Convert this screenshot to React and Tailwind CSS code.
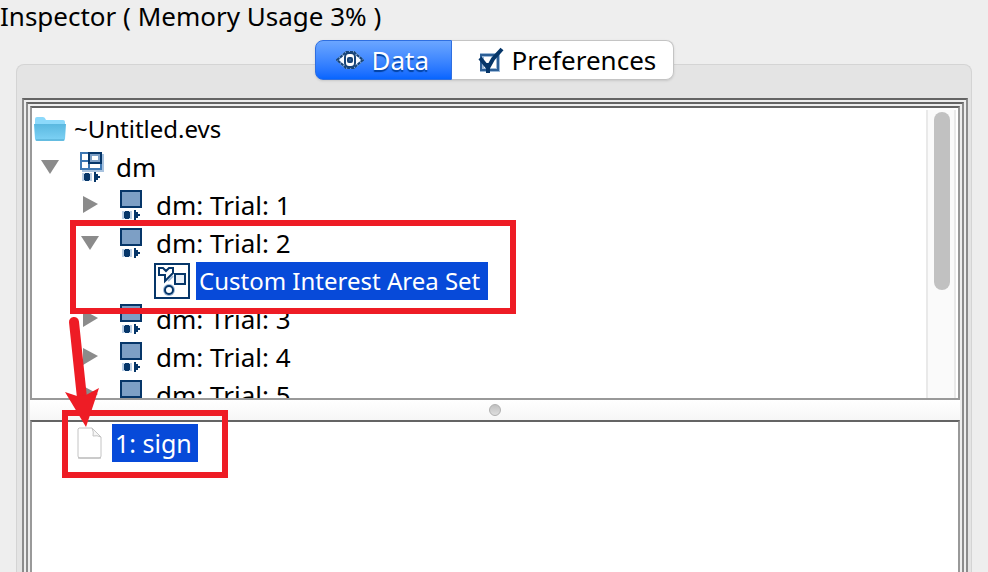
import React, { useState } from "react";

function EyeIcon() {
  return (
    <svg width="28" height="18" viewBox="0 0 28 18" aria-hidden="true">
      <path d="M0 9 L6 3 L10 0 H18 L22 3 L28 9 L22 15 L18 18 H10 L6 15 Z" fill="#7fa6d6" />
      <path d="M3 9 L9 3 V15 Z M25 9 L19 3 V15 Z" fill="#f4f9ff" />
      <path d="M1 9 L7 4 L10 1 H18 L21 4 L27 9 L21 14 L18 17 H10 L7 14 Z" fill="none" stroke="#174478" strokeWidth="2" strokeDasharray="3 1" />
      <rect x="9" y="2" width="10" height="14" rx="4" fill="#fff" stroke="#174478" strokeWidth="2" />
      <rect x="12" y="7" width="4" height="4" rx="1" fill="#2c5f96" stroke="#174478" strokeWidth="2" />
    </svg>
  );
}

function CheckIcon() {
  return (
    <svg width="26" height="28" viewBox="0 0 26 28" aria-hidden="true">
      <path d="M4 9 H20 V24 H4 Z" fill="#fff" stroke="#9db9d8" strokeWidth="4" />
      <path d="M3 9 H20 V24 H3 Z" fill="none" stroke="#2c5f96" strokeWidth="2" />
      <path d="M2 12 L10 22 L15 13 L24 3" fill="none" stroke="#063669" strokeWidth="4" />
      <path d="M10 17 V27" stroke="#063669" strokeWidth="4" />
    </svg>
  );
}

function FolderIcon() {
  return (
    <svg width="32" height="26" viewBox="0 0 32 26" aria-hidden="true">
      <defs>
        <linearGradient id="folder" x1="0" y1="0" x2="0" y2="1">
          <stop offset="0" stopColor="#5ab8e0" />
          <stop offset="1" stopColor="#7fd3f6" />
        </linearGradient>
      </defs>
      <path d="M1 3 Q1 1 3 1 H9 Q11 1 12 4 H29 Q31 4 31 6 V22 H1 Z" fill="#8cd9fb" />
      <path d="M0 8 H32 L31 23 Q31 25 29 25 H3 Q1 25 1 23 Z" fill="url(#folder)" />
      <path d="M2 24 H30" stroke="#4aa5cc" strokeWidth="1" />
    </svg>
  );
}

function Marks() {
  return (
    <>
      <path d="M2 21 H12 V29 H2 Z" fill="#b9cee5" />
      <path d="M5 21 H9 V22 H10 V28 H9 V29 H5 V28 H4 V22 H5 Z" fill="#063669" />
      <path d="M14 20 H16 V22 H18 V24 H20 V26 H18 V28 H16 V30 H14 Z" fill="#063669" />
    </>
  );
}

function GroupIcon() {
  return (
    <svg width="24" height="30" viewBox="0 0 24 30" aria-hidden="true">
      <path d="M2 2 H24 V20 H2 Z" fill="#a9c3df" />
      <path d="M1 1 H21 V17 H1 Z" fill="#fff" stroke="#3f78b3" strokeWidth="2" />
      <path d="M1 9 H21 M9 1 V17" stroke="#3f78b3" strokeWidth="2" />
      <path d="M9 1 H21 V11 H9 Z" fill="#7d9fc5" stroke="#063669" strokeWidth="2" />
      <rect x="12" y="4" width="6" height="4" fill="#fff" />
      <Marks />
    </svg>
  );
}

function TrialIcon() {
  return (
    <svg width="24" height="30" viewBox="0 0 24 30" aria-hidden="true">
      <rect x="1" y="1" width="20" height="16" fill="#7d9fc5" stroke="#063669" strokeWidth="2" />
      <Marks />
    </svg>
  );
}

function AreaSetIcon() {
  return (
    <svg width="36" height="36" viewBox="0 0 36 36" aria-hidden="true">
      <rect x="1" y="1" width="34" height="34" fill="#fff" stroke="#063669" strokeWidth="2" />
      <path d="M5 5 H9 L12 8 L15 5 H19 V10 L11 18 V12 H5 Z" fill="#fff" stroke="#063669" strokeWidth="2" />
      <path d="M14 18 L19 13" stroke="#9db9d8" strokeWidth="2" />
      <rect x="21" y="11" width="10" height="10" fill="#e8eff7" stroke="#063669" strokeWidth="2" />
      <circle cx="15" cy="27" r="6" fill="#9db9d8" />
      <circle cx="15" cy="27" r="4" fill="#fff" stroke="#063669" strokeWidth="2" />
    </svg>
  );
}

function PageIcon() {
  return (
    <svg width="26" height="32" viewBox="0 0 26 32" aria-hidden="true">
      <path d="M2 1 H15 L24 10 V29 Q24 31 22 31 H3 Q1 31 1 29 V2 Z" fill="#fff" stroke="#c4c4c4" />
      <path d="M1 31 H24" stroke="#b4b4b4" />
      <path d="M15 1 Q17 5 16 9 Q20 8 24 10 Z" fill="#f6f6f6" stroke="#c4c4c4" />
    </svg>
  );
}

function Toggle({ open, label }) {
  return (
    <button type="button" aria-label={label} aria-expanded={open} className="flex w-5 justify-center">
      <svg width="18" height="18" viewBox="0 0 18 18" aria-hidden="true">
        <path d={open ? "M0 2 H18 L9 16 Z" : "M2 0 V17 L17 8 Z"} fill="#8b8b8b" />
      </svg>
    </button>
  );
}

function TrialRow({ number, open }) {
  return (
    <div className="flex h-[38px] items-center pl-12">
      <Toggle open={open} label={`Trial ${number}`} />
      <span className="ml-5 w-9">
        <TrialIcon />
      </span>
      <span className="text-[26px]">dm: Trial: {number}</span>
    </div>
  );
}

function Annotations() {
  return (
    <svg className="pointer-events-none absolute top-0 left-0" width="530" height="490" viewBox="0 0 530 490" aria-hidden="true">
      <g fill="none" stroke="#ee1c25" strokeWidth="6">
        <rect x="73" y="223" width="440" height="88" />
        <rect x="65" y="413" width="160" height="62" />
      </g>
      <path d="M74 322 L82 398" stroke="#ee1c25" strokeWidth="10" strokeLinecap="round" />
      <path d="M65 392 L77 396 L86 395 L99 388 L86 427 Z" fill="#ee1c25" />
    </svg>
  );
}

export default function App() {
  const [tab, setTab] = useState("data");
  return (
    <div className="relative flex h-screen flex-col overflow-hidden bg-[#eeeeee] font-['Noto_Sans','Lucida_Grande',sans-serif] text-[24px] leading-[36px] text-black">
      <h1 className="h-10 text-[26px] leading-8">Inspector ( Memory Usage 3% )</h1>

      <div role="tablist" className="z-10 flex h-10 shrink-0 self-center rounded-lg text-[26px] shadow-sm">
        <button
          type="button"
          role="tab"
          aria-selected={tab === "data"}
          onClick={() => setTab("data")}
          className="flex w-[137px] items-center gap-2 rounded-l-lg border border-[#2f6fe0] bg-linear-to-b from-[#6ba6ff] to-[#0565ff] pl-5 text-white [text-shadow:0_2px_1px_#0040a0]"
        >
          <EyeIcon />
          Data
        </button>
        <button
          type="button"
          role="tab"
          aria-selected={tab === "preferences"}
          onClick={() => setTab("preferences")}
          className="flex w-[222px] items-center gap-2 rounded-r-lg border border-l-0 border-[#c4c4c4] bg-white pl-[26px]"
        >
          <CheckIcon />
          Preferences
        </button>
      </div>

      <main className="-mt-4 mr-4 ml-4 flex min-h-0 flex-1 flex-col rounded-t-lg border border-b-0 border-[#d4d4d4] bg-[#e4e4e4] pt-[33px] pr-[3px] pl-[5px]">
        <div className="flex min-h-0 flex-1 border-x-2 border-t-2 border-x-[#8c8c8c] border-t-[#646464] bg-[#eeeeee] px-[2px] pt-[2px]">
          <div className="flex min-h-0 min-w-0 flex-1 flex-col border-x-2 border-t-2 border-x-[#8c8c8c] border-t-[#646464] px-[2px] pt-[2px]">
            <section className="flex h-[294px] shrink-0 border-2 border-[#999999] border-t-[#646464] bg-white">
              <div className="min-w-0 flex-1 overflow-hidden pt-[2px]">
                <div className="flex h-[38px] items-center gap-2 pl-[2px]">
                  <FolderIcon />
                  <span>~Untitled.evs</span>
                </div>
                <div className="flex h-[38px] items-center pl-2">
                  <Toggle open label="dm" />
                  <span className="ml-5 w-9">
                    <GroupIcon />
                  </span>
                  <span className="text-[26px]">dm</span>
                </div>
                <TrialRow number={1} open={false} />
                <TrialRow number={2} open />
                <div className="flex h-[38px] items-center gap-[6px] pl-[122px]">
                  <AreaSetIcon />
                  <span className="bg-[#074ad9] pr-2 pl-[3px] leading-[38px] text-white">Custom Interest Area Set</span>
                </div>
                <TrialRow number={3} open={false} />
                <TrialRow number={4} open={false} />
                <TrialRow number={5} open={false} />
              </div>
              <div className="mt-[2px] mr-[2px] w-[30px] border-x-2 border-[#e9e9e9] bg-[#fafafa] px-[6px] pt-[2px]">
                <div className="h-[178px] w-4 rounded-full bg-[#c1c1c1]" />
              </div>
            </section>
            <div role="separator" aria-label="Resize panes" className="flex h-5 shrink-0 items-center justify-center bg-linear-to-b from-white to-[#f6f6f6]">
              <span className="size-3 rounded-full border border-[#b0b0b0] bg-linear-to-b from-[#c0c0c0] to-[#dedede]" />
            </div>
            <section className="min-h-0 flex-1 border-x-2 border-t-2 border-x-[#999999] border-t-[#646464] bg-white pt-[2px] pl-[45px]">
              <div className="flex h-[38px] items-center gap-[9px]">
                <PageIcon />
                <span className="bg-[#074ad9] pr-[6px] pl-[3px] text-[25px] leading-[38px] text-white">1: sign</span>
              </div>
            </section>
          </div>
        </div>
      </main>
      <Annotations />
    </div>
  );
}
